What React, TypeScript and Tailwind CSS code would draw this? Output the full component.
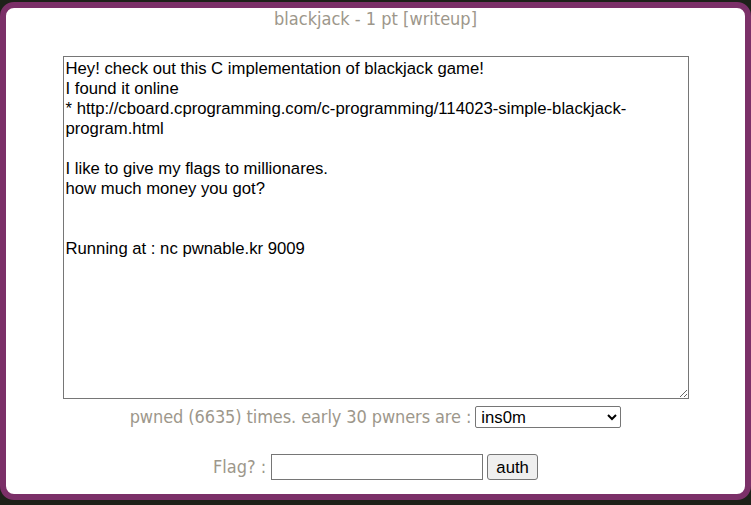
import { useState } from "react";

const desc = `Hey! check out this C implementation of blackjack game!
I found it online
* http://cboard.cprogramming.com/c-programming/114023-simple-blackjack-program.html

I like to give my flags to millionares.
how much money you got?


Running at : nc pwnable.kr 9009`;

const label =
  "font-['DejaVu_Sans_Condensed','DejaVu_Sans',sans-serif] [font-stretch:condensed] text-[18px] leading-[22px] text-[#9d978b]";
const arial = "font-['Liberation_Sans',Arial,sans-serif] text-black";

export default function App() {
  const [flag, setFlag] = useState("");

  return (
    <div className="h-[505px] w-[751px] overflow-hidden bg-[#1d2119] pt-[2px]">
      <div className="h-[498px] rounded-[14px] border-[6px] border-[#7b3068] bg-white">
        <div className={`h-[22px] text-center ${label}`}>blackjack - 1 pt [writeup]</div>

        <div className="mt-[26px] flex justify-center">
          <textarea
            readOnly
            value={desc}
            className={`h-[343px] w-[626px] resize-y border border-[#767676] p-[2px] text-[16.7px] leading-[20px] outline-none ${arial}`}
          />
        </div>

        <div className="mt-[7px] flex items-center justify-center gap-[4px]">
          <span className={`tracking-[-0.1px] ${label}`}>pwned (6635) times. early 30 pwners are :</span>
          <select
            defaultValue="ins0m"
            className={`h-[22px] w-[146px] rounded-[2px] border border-[#767676] bg-white pl-[1px] text-[16.7px] ${arial}`}
          >
            <option>ins0m</option>
          </select>
        </div>

        <div className="mt-[26px] flex items-center justify-center">
          <span className={`mr-[5px] ${label}`}>Flag? :</span>
          <input
            value={flag}
            onChange={(e) => setFlag(e.target.value)}
            className={`h-[26px] w-[212px] border border-[#767676] px-[2px] text-[16.7px] outline-none ${arial}`}
          />
          <button
            className={`ml-[4px] h-[26px] w-[51px] rounded-[3px] border border-[#767676] bg-[#efefef] text-[16.7px] ${arial}`}
          >
            auth
          </button>
        </div>
      </div>
    </div>
  );
}
